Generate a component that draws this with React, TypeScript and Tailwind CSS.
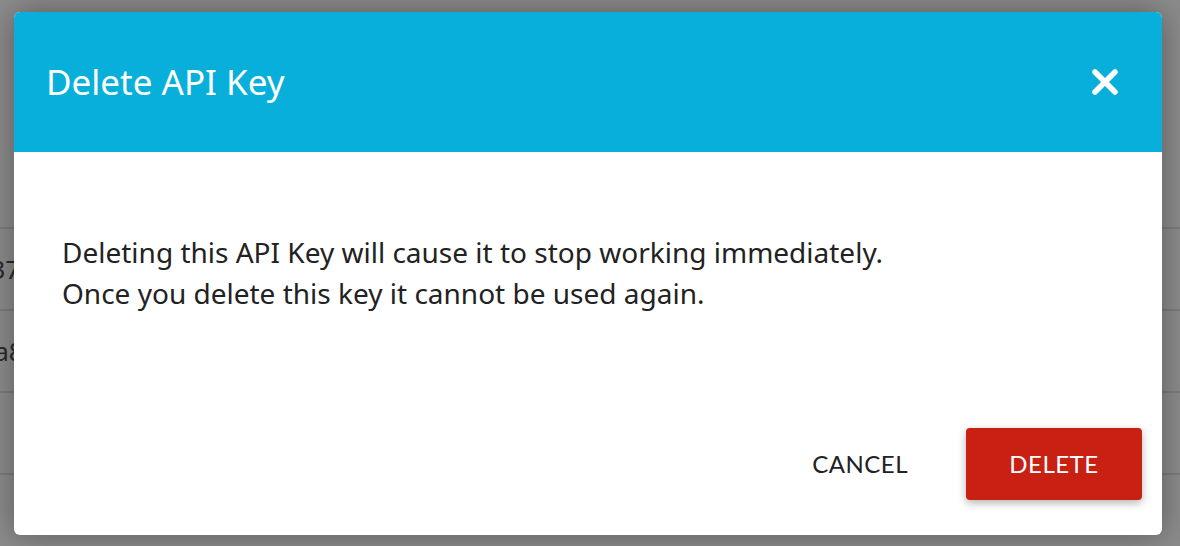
import React from 'react';

const rows = ['', 'e9f37', 'c21a8', ''];

const BackgroundTable: React.FC = () => (
  <div className="flex flex-col pt-[147px]">
    {rows.map((text, i) => (
      <div key={i} className="h-[82px] border-b-2 border-[#7b7b7b] flex items-center">
        <span className="ml-[-48px] text-[26px] text-[#2a2a2a] font-['Noto_Sans',sans-serif]">{text}</span>
      </div>
    ))}
  </div>
);

const CloseIcon: React.FC = () => (
  <svg width="28" height="28" viewBox="0 0 28 28" fill="none">
    <path d="M4 4L24 24M24 4L4 24" stroke="white" strokeWidth="5.5" strokeLinecap="round" />
  </svg>
);

const App: React.FC = () => {
  return (
    <div className="relative h-[546px] w-full overflow-hidden bg-[#8b8b8b] font-['Lato',sans-serif]">
      <BackgroundTable />

      <div className="absolute left-[14px] top-[12px] flex h-[523px] w-[1148px] flex-col overflow-hidden rounded-[6px] bg-white shadow-[0_0_30px_rgba(0,0,0,0.35)]">
        <div className="flex h-[140px] items-center justify-between bg-[#09afdb] pl-[32px] pr-[43px]">
          <h2 className="font-['Noto_Sans',sans-serif] text-[35px] font-normal text-white">Delete API Key</h2>
          <button className="flex items-center justify-center">
            <CloseIcon />
          </button>
        </div>

        <div className="flex-1 px-[48px] pt-[80px] font-['Noto_Sans',sans-serif] text-[28px] leading-[41px] text-[#222]">
          <p>Deleting this API Key will cause it to stop working immediately.</p>
          <p>Once you delete this key it cannot be used again.</p>
        </div>

        <div className="flex items-center justify-end gap-[34px] pb-[33px] pr-[20px]">
          <button className="px-[24px] py-[20px] text-[24px] tracking-[0.5px] text-[#222]">CANCEL</button>
          <button className="h-[72px] w-[176px] rounded-[4px] bg-[#c92014] text-[24px] tracking-[0.5px] text-white shadow-[0_3px_8px_rgba(0,0,0,0.3)]">
            DELETE
          </button>
        </div>
      </div>
    </div>
  );
};

export default App;
